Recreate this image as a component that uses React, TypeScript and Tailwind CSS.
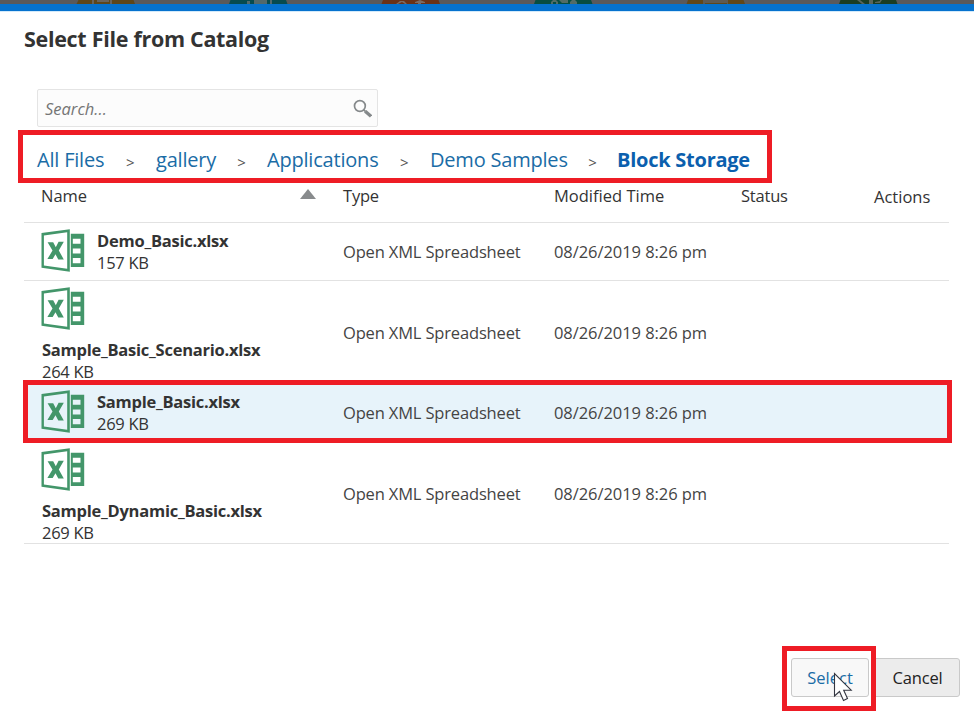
type FileRow = {
  name: string;
  size: string;
  stacked?: boolean;
  selected?: boolean;
};

const files: FileRow[] = [
  { name: "Demo_Basic.xlsx", size: "157 KB" },
  { name: "Sample_Basic_Scenario.xlsx", size: "264 KB", stacked: true },
  { name: "Sample_Basic.xlsx", size: "269 KB", selected: true },
  { name: "Sample_Dynamic_Basic.xlsx", size: "269 KB", stacked: true },
];

const crumbs = [
  { label: "All Files", width: "w-[119px]" },
  { label: "gallery", width: "w-[111px]" },
  { label: "Applications", width: "w-[163px]" },
  { label: "Demo Samples", width: "w-[187px]" },
];

const columns = "grid grid-cols-[319px_211px_187px_132px_1fr]";

function ExcelIcon() {
  return (
    <svg className="h-[43px] w-[44px] shrink-0" viewBox="0 0 44 43" fill="#43966a">
      <path
        fillRule="evenodd"
        d="M0.5 4L28.8 0.2V42.8L0.5 38.8ZM2.9 6.4V36.5L26.2 39.8V3.2Z"
      />
      <path d="M6.6 13.2H12.2L14.8 18.2L17.6 12.7H22.8L17.8 21.5L22.8 30.4H17.3L14.5 25.2L11.7 30H6.4L11.5 21.6Z" />
      <path
        fillRule="evenodd"
        d="M29.8 4.7H43.2V38H29.8ZM31.8 9.7V14.8H39.5V9.7ZM31.8 19.4V24.4H39.5V19.4ZM31.8 29V34.2H39.5V29Z"
      />
    </svg>
  );
}

function BackdropStrip() {
  return (
    <svg className="block h-1 w-full" viewBox="0 0 974 4" preserveAspectRatio="none">
      <rect width="974" height="4" fill="#59595b" />
      <path d="M78.5 0H133.5L135 4H76.5Z" fill="#5d461a" />
      <path d="M92 0H94V4H92ZM97 0H109V2H97ZM110 0H112V4H110Z" fill="#69635a" />
      <path d="M230.5 0H286L287.5 4H229Z" fill="#064b4f" />
      <path d="M247 1H250V4H247ZM254 0H267V4H254ZM270 0H272V4H270Z" fill="#52696b" />
      <path d="M383 0H438.5L440 4H381.5Z" fill="#6a3116" />
      <path d="M396 4L400 1L404 1L407 4H405L402 2L398 4ZM415 2L420 0L425 2V3H421V4H418V3H415Z" fill="#7b6a62" />
      <path d="M535.5 0H591L592.5 4H534Z" fill="#074d41" />
      <path d="M551 4V2L553 0H556L558 2V4H556V2H553V4ZM559 0H568V3H562ZM570 4V2L572 0H575L577 2V4Z" fill="#526c66" />
      <path d="M688 0H743.5L745 4H686.5Z" fill="#60471a" />
      <rect x="703" width="25" height="4" fill="#5e5a52" />
      <rect x="705" y="3" width="22" height="1" fill="#60471a" />
      <path d="M840.5 0H896L897.5 4H839Z" fill="#1a3d23" />
      <path d="M857 0H860L865 4H862ZM869 0H873V4H869ZM875 2L880 1V0H882L880 3H875Z" fill="#58655b" />
    </svg>
  );
}

export default function App() {
  return (
    <div className="relative flex h-[716px] w-[974px] flex-col overflow-hidden bg-white font-['Open_Sans','Noto_Sans',sans-serif] text-[16.5px] leading-[22px] text-[#333]">
      <BackdropStrip />
      <div className="h-2 shrink-0 border-b border-[#d3eafa] bg-[#0572ce]" />

      <h1 className="mt-[13px] ml-6 h-[30px] text-[21.5px] leading-[28px] font-bold tracking-[-0.3px]">
        Select File from Catalog
      </h1>

      <div className="mt-[34px] ml-[37px] flex h-[38px] w-[341px] shrink-0 items-center justify-between rounded-[2px] border border-[#e4e4e4] bg-[#fcfcfc] pr-[5px] pl-[7px]">
        <span className="pt-[2px] text-[#757575] italic">Search...</span>
        <svg className="size-[19px]" viewBox="0 0 19 19" fill="none" stroke="#85898b">
          <circle cx="6.9" cy="7" r="5.4" strokeWidth="1.7" />
          <path d="M10.7 10.8L12.4 12.4" strokeWidth="1.8" />
          <path d="M12.2 12.2L18 17.3" strokeWidth="3.4" />
        </svg>
      </div>

      <nav className="mt-[3px] ml-[18px] flex h-[53px] w-[754px] shrink-0 items-center border-[5px] border-[#ee1c25] pt-[7px] pl-[14px] text-[20px] leading-[28px] tracking-[-0.2px] text-[#1a6ca6]">
        {crumbs.map((c) => (
          <div key={c.label} className={`flex shrink-0 items-center ${c.width}`}>
            <a className="whitespace-nowrap">{c.label}</a>
            <span className="flex-1 pt-[3px] text-center text-[15px] text-[#555]">&gt;</span>
          </div>
        ))}
        <a className="font-bold whitespace-nowrap tracking-[-0.25px] text-[#0b5fae]">Block Storage</a>
      </nav>

      <div className="ml-6 w-[925px]">
        <div className={`${columns} h-10 border-b border-[#e2e2e2] pt-[2px]`}>
          <div className="flex justify-between pr-[27px] pl-[17px]">
            <span>Name</span>
            <svg className="mt-1 h-[10px] w-4" viewBox="0 0 16 10">
              <path d="M8 0L16 10H0Z" fill="#888b8d" />
            </svg>
          </div>
          <span className="tracking-[-0.2px]">Type</span>
          <span>Modified Time</span>
          <span className="tracking-[-0.2px]">Status</span>
          <span className="pt-px pl-px">Actions</span>
        </div>

        {files.map((f) => (
          <div
            key={f.name}
            className={`${columns} items-center ${f.stacked ? "h-[102.5px]" : "h-[58px]"} ${
              f.selected ? "bg-[#e7f3fa]" : "border-b border-[#e2e2e2]"
            }`}
          >
            <div
              className={`flex self-start pl-[17px] ${
                f.stacked ? "flex-col gap-[9px] pt-[6px]" : "gap-3 pt-[6px]"
              }`}
            >
              <ExcelIcon />
              <div className={f.stacked ? "pl-px whitespace-nowrap" : f.selected ? "pt-px whitespace-nowrap" : "pt-[0.5px] whitespace-nowrap"}>
                <div className="font-bold tracking-[-0.25px]">{f.name}</div>
                <div className="tracking-[-0.3px]">{f.size}</div>
              </div>
            </div>
            <span className={`tracking-[-0.16px] text-[#444] ${f.stacked ? "pt-[2px]" : ""}`}>
              Open XML Spreadsheet
            </span>
            <span className={`tracking-[-0.06px] text-[#444] ${f.stacked ? "pt-[2px]" : ""}`}>
              08/26/2019 8:26 pm
            </span>
          </div>
        ))}
      </div>

      <div className="mt-[102px] flex h-[65px] items-center justify-end pr-[14px]">
        <div className="z-10 flex h-[65px] w-[94px] items-center justify-center border-[5px] border-[#ee1c25] bg-white pb-[2px]">
          <button className="h-[39px] w-[78px] translate-x-px rounded-[3px] border border-[#c9c9c9] bg-[#f8f8f8] text-[#1a6ca6]">
            Select
          </button>
        </div>
        <button className="mb-[2px] -ml-1 h-[39px] w-[88px] rounded-[3px] border border-[#c9c9c9] bg-[#ececec] pl-[3px] tracking-[-0.15px] text-[#222]">
          Cancel
        </button>
      </div>

      <div className="pointer-events-none absolute top-[380px] left-[23px] h-[63px] w-[929px] border-[5px] border-[#ee1c25]" />
      <svg className="pointer-events-none absolute top-[672px] left-[833px] z-20 h-[30px] w-[20px]" viewBox="0 0 20 30">
        <path
          d="M1.5 1.5V24L6.5 19.5L10.5 28.5L14.5 26.5L10.7 18.2H18.2Z"
          fill="#fff"
          stroke="#333640"
          strokeWidth="1.1"
        />
      </svg>
    </div>
  );
}
